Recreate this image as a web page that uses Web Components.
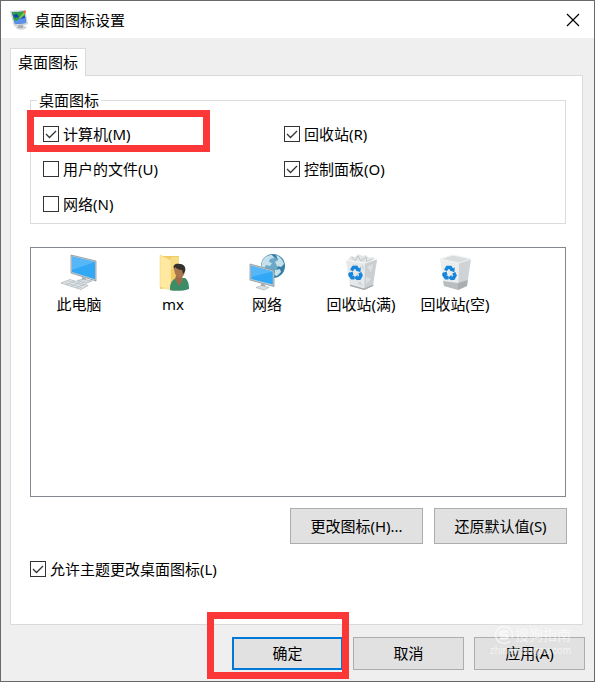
<!DOCTYPE html>
<html lang="zh-CN">
<head>
<meta charset="utf-8">
<title>桌面图标设置</title>
<style>
  body {
    margin: 0;
    font: 15px/20px "Noto Sans", "Noto Sans CJK SC", sans-serif;
    color: #000;
  }
</style>
</head>
<body>

<dialog-window heading="桌面图标设置">
  <tab-panel label="桌面图标">
    <group-box label="桌面图标">
      <check-box checked>计算机(M)<red-mark slot="mark" style="--x: -16px; --y: -14px; --w: 183px; --h: 42px"></red-mark></check-box>
      <check-box checked>回收站(R)</check-box>
      <check-box>用户的文件(U)</check-box>
      <check-box checked>控制面板(O)</check-box>
      <check-box>网络(N)</check-box>
    </group-box>
    <icon-list>
      <icon-item icon="computer">此电脑</icon-item>
      <icon-item icon="user">mx</icon-item>
      <icon-item icon="network">网络</icon-item>
      <icon-item icon="full">回收站(满)</icon-item>
      <icon-item icon="empty">回收站(空)</icon-item>
    </icon-list>
    <button-row>
      <push-button size="large">更改图标(H)...</push-button>
      <push-button size="large">还原默认值(S)</push-button>
    </button-row>
    <check-box checked>允许主题更改桌面图标(L)</check-box>
  </tab-panel>
  <push-button slot="footer" primary>确定<red-mark slot="mark" style="--x: -25px; --y: -25px; --w: 142px; --h: 67px"></red-mark></push-button>
  <push-button slot="footer">取消</push-button>
  <push-button slot="footer">应用(A)<water-mark slot="mark"></water-mark></push-button>
</dialog-window>

<script>
// attach an open root and fill it
function render(el, html) {
  const template = document.createElement("template");
  template.innerHTML = html;
  el.attachShadow({ mode: "open" }).appendChild(template.content.cloneNode(true));
}

const recycle = `
  <g fill="none" stroke="#1685dc" stroke-width="3.4">
    <path d="M8.500 17.500l1.800-3h3.200l1.800 2.800"/>
    <path d="M16.800 19.800l1.200 2.600-1.600 2.800H14"/>
    <path d="M11.500 24.800H9l-2-2.800.8-2"/>
  </g>
  <path d="M17.800 14.200l-.4 5-4.400-1.800zM14.600 21.800l-.2 5.800-3.400-2.900zM4.800 20.600l4.800-2.200 1 4.400z" fill="#1685dc"/>`;

const icons = {
  computer: `
    <path d="M12 2l25 6v20l-25-8z" fill="#c3ccd1" stroke="#8a979e" stroke-width=".8"/>
    <path d="M13 3.500l23 5.600v17.200l-23-7.200z" fill="#32a7f5"/>
    <path d="M13 3.500l23 5.600L13 17z" fill="#55b7f8"/>
    <path d="M23 24l4 1.400v3.400l-4-1z" fill="#9da9af"/>
    <path d="M18 27.500l7-1.400 8 1.900-6 2.400z" fill="#d5dbde" stroke="#9da9af" stroke-width=".6"/>
    <path d="M2 30l9-3.500 18 6-7 4z" fill="#e5e9eb" stroke="#a3afb6" stroke-width=".7"/>
    <path d="M6 29.500l17 5.300M9 28l17 5.200M7 31.700l9-3.600M12 33.300l9-3.600M17 35l8-3.600" stroke="#aab6bd" stroke-width=".6"/>`,
  user: `
    <g transform="translate(1 0)">
      <path d="M6 3h19v30L6 36z" fill="#f2cb63"/>
      <path d="M17 4h8v12h-8z" fill="#f7dc86"/>
      <path d="M6 2l11 5v30L6 34z" fill="#ffe8a0" stroke="#f1d078" stroke-width=".5"/>
      <path d="M16 37c-.5-7 2.500-11 7-12h8c3 2 4 6 4 11-5 2-14 2.500-19 1z" fill="#3d8c68"/>
      <path d="M22 23h6l1 4-4 6-4-7z" fill="#9b6c4c"/>
      <path d="M20 14c0-4 10-4 11 1 .5 5-2 10-5.500 10S20 19 20 14z" fill="#a8754f"/>
      <path d="M20 16c-2-5 3-6 6-5 5 0 7 6 4 9l-1 1-1-4c-3 0-5-1-7-3z" fill="#34302f"/>
    </g>`,
  network: `
    <g transform="translate(1 0)">
      <circle cx="25" cy="13" r="12" fill="#357fa6"/>
      <circle cx="22" cy="11" r="8.500" fill="#6ba9c6"/>
      <path d="M14 9c2-5 6-7 10-7l2 3-4 1-1 3 3 1-2 3-4-1-2 4-3-1zM28 2c4 1 7 5 8 9l-3 3-4-1-2-4 3-2zM27 17l5-1 1 3-4 4-3-1z" fill="#c4e0ea"/>
      <path d="M2 11l24 6.500v16L2 27z" fill="#c3ccd1" stroke="#87949b" stroke-width=".8"/>
      <path d="M3.200 12.800l21.600 5.800v13L3.200 26z" fill="#32a7f5"/>
      <path d="M3.200 12.800l21.600 5.800L3.200 24z" fill="#55b7f8"/>
      <path d="M13 30.500l4 1v3.500l-4-1z" fill="#9da9af"/>
      <path d="M8 34.500l6-2 7 2-5 2.500z" fill="#dbe0e3" stroke="#9da9af" stroke-width=".6"/>
    </g>`,
  full: `
    <g transform="translate(2 0)">
      <path d="M4 8l4-5 4 1 3-3 5 2 3-1 3 3 4-1 4 4-1 5H5z" fill="#e3e5e6"/>
      <path d="M9 4l3 4 3-5 3 5 5-4 1 5 5-3" fill="none" stroke="#bfc4c7"/>
      <path d="M3 7l19 3-1 27-14-4z" fill="#e6e8e9"/>
      <path d="M22 10l12-4-4 27-9 4z" fill="#cbcfd1"/>
      <path d="M3 7l19 3 12-4" fill="none" stroke="#f8f9f9"/>
      <path d="M24 14l6-3-2 8zM23 24l5 2-5 5z" fill="#dde0e1"/>
      <path d="M10 11l5 1-3 3zM17 28l3 5-6-2zM18 13l3 5-1-6z" fill="#d2d6d8"/>
      <path d="M7 31.500l14 4 9.500-4-.5 1.500-9 4-14-4z" fill="#a4aaad"/>${recycle}
    </g>`,
  empty: `
    <g transform="translate(2 0)">
      <path d="M3 6l13-4 18 4-12 4z" fill="#d9dcdd"/>
      <path d="M3 6l19 4-1 27-14-4z" fill="#eceeee"/>
      <path d="M22 10l12-4-4 27-9 4z" fill="#cfd3d5"/>
      <path d="M6 28l15 2v7l-14-4z" fill="#b9bdbf"/>
      <path d="M21 30l9.700-3-.7 6-9 4z" fill="#a9aeb0"/>
      <path d="M3 6l13-4 18 4-12 4z" fill="none" stroke="#f1f2f3"/>${recycle}
    </g>`
};

class DialogWindow extends HTMLElement {
  constructor() {
    super();
    render(this, `
      <style>
        :host {
          display: flex;
          flex-direction: column;
          box-sizing: border-box;
          min-height: 100vh;
          border: 1px solid #69696b;
          background: #efefef;
        }
        header {
          display: flex;
          align-items: center;
          gap: 6px;
          height: 37px;
          padding: 0 12px 0 8px;
          background: #fff;
        }
        h1 {
          flex: 1;
          margin: 0;
          font: inherit;
        }
        button {
          display: grid;
          padding: 2px;
          border: 0;
          background: none;
        }
        main {
          flex: 1;
          display: grid;
          padding: 10px 11px 0 9px;
        }
        footer {
          display: flex;
          justify-content: flex-end;
          gap: 10px;
          padding: 12px 9px 11px;
        }
      </style>
      <header>
        <svg width="20" height="20" viewBox="0 0 20 20" aria-hidden="true">
          <ellipse cx="12" cy="17.500" rx="5.500" ry="2.200" fill="#d3d6d8"/>
          <path d="M9 14l5 1v3H9z" fill="#a7adb1"/>
          <path d="M1.500 1.500L16 .5 18.500 14l-13 2z" fill="#d0d5d9" stroke="#b4babf" stroke-width=".5"/>
          <path d="M3 2.500l12.500-1L17 13 6 14z" fill="#2549c4"/>
          <path d="M5 10l11.500-2 .5 5-11 1z" fill="#5b93ea"/>
          <path d="M3 2.500L15.500 1.500 16 6l-5 1-3 4-3-1z" fill="#2ba244"/>
          <path d="M4 5l4-1 2 3-4 1z" fill="#1d3fae"/>
          <path d="M10 8l5-6 1 2-5 5z" fill="#87cf4b"/>
          <path d="M14 3l2-3 1 1-1 3z" fill="#f06b32"/>
        </svg>
        <h1></h1>
        <button type="button" aria-label="关闭">
          <svg width="14" height="14" viewBox="0 0 14 14"><path d="M1 1l12 12M13 1L1 13" stroke="#000" stroke-width="1.200"/></svg>
        </button>
      </header>
      <main><slot></slot></main>
      <footer><slot name="footer"></slot></footer>
    `);
    this.shadowRoot.querySelector("h1").textContent = this.getAttribute("heading");
  }
}

class TabPanel extends HTMLElement {
  constructor() {
    super();
    render(this, `
      <style>
        :host {
          display: flex;
          flex-direction: column;
          align-items: flex-start;
        }
        [role=tab] {
          z-index: 1;
          height: 28px;
          margin-bottom: -1px;
          padding: 0 7px 2px;
          border: 1px solid #dadada;
          border-bottom: 0;
          background: #fff;
          font: inherit;
          color: inherit;
        }
        [role=tabpanel] {
          flex: 1;
          align-self: stretch;
          display: flex;
          flex-direction: column;
          padding: 14px 16px 45px 19px;
          border: 1px solid #dadada;
          background: #fff;
        }
      </style>
      <button type="button" role="tab" aria-selected="true"></button>
      <div role="tabpanel"><slot></slot></div>
    `);
    this.shadowRoot.querySelector("button").textContent = this.getAttribute("label");
  }
}

class GroupBox extends HTMLElement {
  constructor() {
    super();
    render(this, `
      <style>
        :host { display: block; }
        fieldset {
          min-width: 0;
          margin: 0;
          padding: 0 6px;
          border: 1px solid #dcdcdc;
        }
        legend { padding: 0 2px; }
        div {
          display: grid;
          grid-template-columns: 1fr 1fr;
          gap: 15px 0;
          padding: 14px 34px 9px 6px;
        }
      </style>
      <fieldset>
        <legend></legend>
        <div><slot></slot></div>
      </fieldset>
    `);
    this.shadowRoot.querySelector("legend").textContent = this.getAttribute("label");
  }
}

class CheckBox extends HTMLElement {
  constructor() {
    super();
    render(this, `
      <style>
        :host {
          display: flex;
          position: relative;
        }
        label {
          display: flex;
          align-items: center;
          gap: 4px;
        }
        .box { display: grid; }
        input, svg { grid-area: 1 / 1; }
        input {
          appearance: none;
          width: 16px;
          height: 16px;
          margin: 0;
          border: 1px solid #333;
          background: #fff;
        }
        svg {
          visibility: hidden;
          pointer-events: none;
        }
        input:checked + svg { visibility: visible; }
      </style>
      <label>
        <span class="box">
          <input type="checkbox">
          <svg width="16" height="16" viewBox="0 0 16 16"><path d="M3 8l3.500 3.500L13 5" fill="none" stroke="#333" stroke-width="1.300"/></svg>
        </span>
        <span><slot></slot></span>
      </label>
      <slot name="mark"></slot>
    `);
    this.shadowRoot.querySelector("input").checked = this.hasAttribute("checked");
  }
}

class IconList extends HTMLElement {
  constructor() {
    super();
    render(this, `
      <style>
        :host {
          flex: 1;
          display: flex;
          flex-wrap: wrap;
          align-content: flex-start;
          min-height: 200px;
          margin: 23px 0 11px;
          padding: 5px 1px;
          border: 1px solid #828790;
        }
      </style>
      <slot></slot>
    `);
  }
}

class IconItem extends HTMLElement {
  constructor() {
    super();
    render(this, `
      <style>
        :host {
          display: flex;
          flex-direction: column;
          align-items: center;
          gap: 1px;
          width: 94px;
        }
      </style>
      <svg width="40" height="40" viewBox="0 0 40 40" aria-hidden="true">${icons[this.getAttribute("icon")]}</svg>
      <span><slot></slot></span>
    `);
  }
}

class ButtonRow extends HTMLElement {
  constructor() {
    super();
    render(this, `
      <style>
        :host {
          display: flex;
          justify-content: flex-end;
          gap: 11px;
          margin: 0 -1px 15px 0;
        }
      </style>
      <slot></slot>
    `);
  }
}

class PushButton extends HTMLElement {
  constructor() {
    super();
    render(this, `
      <style>
        :host {
          display: block;
          position: relative;
        }
        button {
          display: block;
          width: 111px;
          height: 33px;
          padding: 0 0 1px;
          border: 1px solid #adadad;
          background: #e1e1e1;
          font: inherit;
          color: inherit;
        }
        :host([size=large]) button {
          width: 133px;
          height: 36px;
        }
        :host([primary]) button { border: 2px solid #0078d7; }
      </style>
      <button type="button"><slot></slot></button>
      <slot name="mark"></slot>
    `);
  }
}

// red frame drawn over the control it belongs to
class RedMark extends HTMLElement {
  constructor() {
    super();
    render(this, `
      <style>
        :host {
          position: absolute;
          z-index: 2;
          left: var(--x);
          top: var(--y);
          box-sizing: border-box;
          width: var(--w);
          height: var(--h);
          border: 7px solid #fc3737;
          pointer-events: none;
        }
      </style>
    `);
  }
}

class WaterMark extends HTMLElement {
  constructor() {
    super();
    render(this, `
      <style>
        :host {
          position: absolute;
          right: 14px;
          top: -12px;
          display: grid;
          justify-items: end;
          color: #fff;
          opacity: .6;
          pointer-events: none;
        }
        div {
          display: flex;
          align-items: center;
          gap: 1px;
          font-size: 14px;
        }
        span {
          font: 10px/12px "Liberation Sans", sans-serif;
        }
      </style>
      <div>
        <svg width="20" height="20" viewBox="0 0 20 20" fill="none" stroke="#fff">
          <path d="M16 16a8.500 8.500 0 1 1 2-3" stroke-width="1.500"/>
          <path d="M14 6.500H9c-4 0-3 3.500 0 3.500h2c3.500 0 3.500 3.500 0 3.500H6" stroke-width="2.500"/>
        </svg>
        搜狗指南
      </div>
      <span>zhinan.sogou.com</span>
    `);
  }
}

customElements.define("dialog-window", DialogWindow);
customElements.define("tab-panel", TabPanel);
customElements.define("group-box", GroupBox);
customElements.define("check-box", CheckBox);
customElements.define("icon-list", IconList);
customElements.define("icon-item", IconItem);
customElements.define("button-row", ButtonRow);
customElements.define("push-button", PushButton);
customElements.define("red-mark", RedMark);
customElements.define("water-mark", WaterMark);
</script>
</body>
</html>
